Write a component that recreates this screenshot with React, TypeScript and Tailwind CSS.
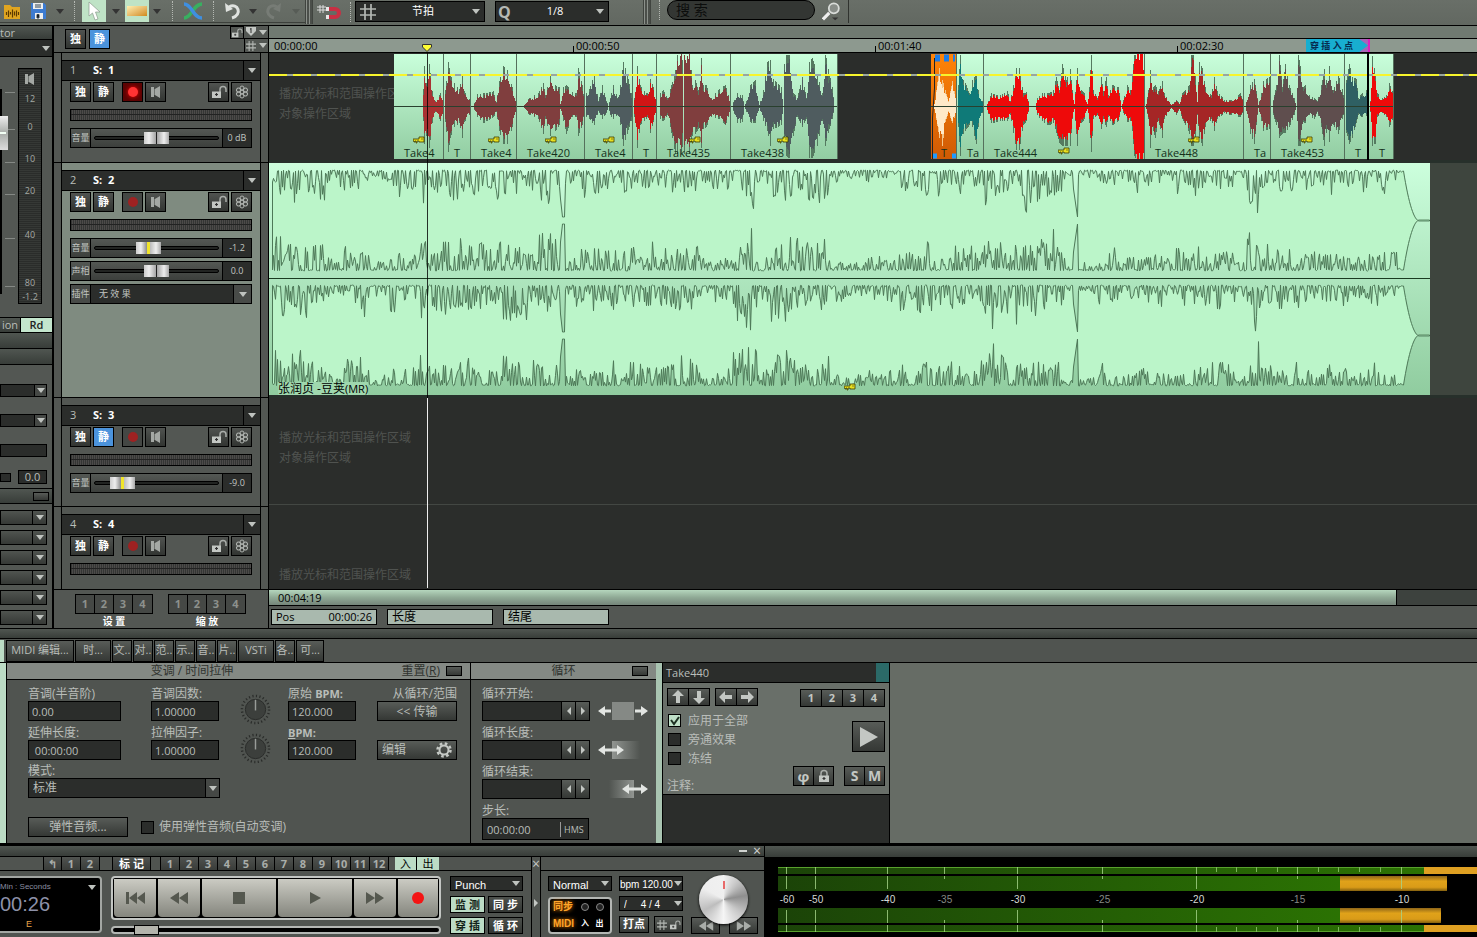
import { useId, type ReactNode } from 'react';
import clsx from 'clsx';

type Peak = [x: number, up: number, down: number];

interface Clip {
  name: string;
  width: number;
  gap?: number;
  color: string;
  keyX?: number;
  low?: boolean;
  selected?: boolean;
  peaks: Peak[];
}

const vocalClips: Clip[] = [
  { name: 'Take4', width: 50, gap: 125, color: '#a83232', keyX: 19, peaks: [[28, 0, 0], [29, 16, 14], [30, 38, 36], [32, 22, 28], [35, 40, 40], [38, 14, 16], [41, 5, 5], [46, 12, 14], [49, 8, 8]] },
  { name: 'T', width: 27, color: '#803e3e', peaks: [[1, 15, 15], [4, 42, 44], [6, 30, 30], [10, 22, 20], [15, 16, 16], [18, 30, 30], [20, 14, 15], [26, 5, 6]] },
  { name: 'Take4', width: 46, color: '#803e3e', keyX: 17, peaks: [[2, 0, 0], [6, 11, 10], [12, 12, 16], [22, 14, 10], [25, 4, 5], [28, 24, 24], [32, 38, 36], [36, 34, 36], [41, 18, 20], [45, 3, 3]] },
  { name: 'Take420', width: 68, color: '#803e3e', keyX: 28, peaks: [[6, 0, 0], [11, 7, 7], [21, 12, 12], [26, 22, 26], [28, 10, 12], [33, 30, 28], [38, 20, 24], [42, 18, 18], [43, 2, 2], [46, 18, 14], [49, 20, 26], [55, 13, 10], [59, 12, 10], [61, 36, 28], [65, 20, 18], [67, 3, 2]] },
  { name: 'Take4', width: 48, color: '#4f5c5f', keyX: 18, peaks: [[1, 12, 10], [4, 16, 12], [9, 30, 18], [13, 5, 4], [17, 20, 12], [21, 5, 6], [23, 0, 0], [25, 8, 8], [28, 20, 12], [32, 8, 8], [35, 20, 18], [38, 42, 38], [42, 30, 26], [46, 12, 14]] },
  { name: 'T', width: 24, color: '#d01515', peaks: [[1, 8, 10], [4, 38, 40], [7, 20, 18], [11, 14, 14], [14, 12, 10], [17, 26, 25], [20, 18, 15], [23, 6, 6]] },
  { name: 'Take435', width: 74, color: '#803e3e', keyX: 32, peaks: [[3, 12, 12], [6, 15, 14], [10, 8, 8], [13, 16, 20], [18, 34, 46], [20, 58, 46], [24, 62, 46], [25, 44, 39], [26, 0, 0], [27, 62, 46], [32, 62, 46], [35, 20, 28], [38, 25, 26], [41, 15, 22], [44, 46, 40], [46, 20, 22], [49, 20, 20], [54, 8, 10], [62, 16, 12], [68, 20, 18], [73, 4, 4]] },
  { name: 'Take438', width: 107, color: '#4f5c5f', keyX: 46, peaks: [[2, 4, 4], [6, 12, 16], [11, 10, 15], [13, 0, 0], [15, 5, 5], [19, 20, 15], [24, 25, 16], [28, 1, 1], [32, 15, 14], [36, 42, 24], [39, 44, 38], [42, 26, 22], [50, 18, 18], [52, 0, 0], [53, 40, 30], [55, 51, 48], [58, 51, 52], [62, 12, 28], [66, 8, 10], [71, 28, 20], [75, 8, 12], [78, 42, 50], [81, 46, 50], [86, 30, 38], [91, 12, 14], [94, 51, 38], [97, 35, 25], [101, 18, 12], [103, 0, 0]] },
  { name: 'T', width: 26, gap: 93, color: '#ffe9c8', selected: true, peaks: [[3, 2, 2], [8, 36, 30], [11, 25, 38], [14, 15, 15], [17, 5, 5], [21, 24, 16], [25, 5, 5]] },
  { name: 'Ta', width: 27, color: '#0f7a78', peaks: [[1, 20, 20], [3, 50, 48], [6, 25, 26], [9, 20, 22], [12, 12, 18], [15, 25, 20], [19, 30, 36], [21, 15, 20], [26, 2, 2]] },
  { name: 'Take444', width: 161, color: '#ee0a0a', keyX: 74, low: true, peaks: [[2, 0, 0], [7, 12, 16], [16, 10, 14], [23, 14, 14], [26, 5, 8], [29, 20, 25], [32, 36, 42], [35, 36, 42], [39, 12, 18], [42, 13, 14], [45, 0, 0], [51, 0, 0], [53, 8, 8], [58, 12, 14], [64, 12, 18], [69, 15, 16], [72, 28, 25], [75, 15, 35], [78, 40, 38], [82, 25, 38], [86, 35, 38], [88, 15, 12], [90, 2, 2], [93, 36, 38], [97, 15, 16], [100, 12, 12], [103, 2, 2], [105, 18, 16], [107, 51, 44], [109, 15, 12], [113, 8, 8], [117, 28, 22], [119, 14, 12], [122, 28, 20], [124, 10, 10], [128, 20, 18], [134, 18, 14], [137, 0, 0], [139, 6, 6], [143, 20, 15], [146, 15, 14], [148, 30, 24], [151, 60, 60], [154, 66, 66], [158, 66, 66], [160, 25, 50]] },
  { name: 'Take448', width: 99, color: '#a52626', keyX: 43, peaks: [[1, 2, 2], [3, 15, 12], [5, 34, 40], [8, 18, 24], [10, 20, 30], [13, 14, 14], [17, 24, 30], [19, 12, 12], [26, 1, 1], [31, 6, 8], [34, 2, 2], [37, 12, 12], [44, 20, 26], [46, 51, 38], [48, 58, 38], [50, 30, 34], [52, 4, 8], [54, 42, 30], [57, 36, 38], [60, 18, 20], [66, 10, 12], [69, 28, 24], [72, 14, 12], [79, 6, 6], [86, 6, 8], [95, 12, 10], [98, 4, 4]] },
  { name: 'Ta', width: 27, color: '#7f4040', peaks: [[2, 4, 4], [6, 20, 26], [10, 26, 36], [13, 8, 8], [14, 1, 1], [17, 12, 14], [19, 24, 24], [25, 28, 22]] },
  { name: 'Take453', width: 74, color: '#5f4e4e', keyX: 30, peaks: [[2, 6, 8], [5, 20, 18], [8, 50, 30], [11, 18, 26], [14, 40, 25], [18, 20, 20], [23, 8, 8], [25, 0, 0], [27, 49, 38], [29, 38, 38], [32, 18, 15], [34, 20, 16], [38, 10, 8], [43, 8, 12], [46, 5, 5], [50, 20, 20], [53, 35, 38], [55, 25, 25], [58, 38, 34], [62, 15, 18], [67, 30, 26], [71, 16, 12], [73, 4, 4]] },
  { name: 'T', width: 24, color: '#2f6063', peaks: [[1, 25, 25], [4, 40, 36], [7, 28, 30], [11, 26, 16], [13, 8, 8], [17, 12, 10], [22, 16, 8]] },
  { name: 'T', width: 25, color: '#ee0a0a', peaks: [[1, 5, 5], [3, 48, 38], [6, 30, 36], [8, 12, 10], [13, 8, 6], [17, 10, 10], [20, 22, 20], [24, 12, 10]] },
];

// how deep the quiet notches cut into the limited mix, by horizontal region
const mixRegions: [end: number, depth: number][] = [
  [56, 36], [75, 16], [100, 32], [118, 12], [150, 26], [290, 38], [306, 18], [345, 34], [430, 32], [464, 20],
  [488, 48], [502, 18], [560, 38], [630, 16], [712, 28], [796, 42], [806, 8], [830, 14], [864, 26], [905, 22],
  [966, 28], [978, 12], [1000, 46], [1128, 24],
];

const noise = (n: number) => {
  const s = Math.sin(n * 127.1 + 11.7) * 43758.5453;
  return s - Math.floor(s);
};

// body is the filled mass of the wave, spikes are the thin peaks that stick out of it
function clipPaths(clip: Clip, seed: number) {
  let body = '';
  let spikes = '';
  const { peaks } = clip;
  const last = peaks[peaks.length - 1][0];
  for (let x = peaks[0][0]; x <= last; x++) {
    const i = Math.max(0, peaks.findIndex((p) => p[0] >= x));
    const b = peaks[i];
    const a = peaks[Math.max(0, i - 1)];
    const t = b[0] === a[0] ? 1 : (x - a[0]) / (b[0] - a[0]);
    const n = noise(seed * 97 + x);
    const k = 0.66 + n * 0.26;
    const up = a[1] + (b[1] - a[1]) * t;
    const down = a[2] + (b[2] - a[2]) * t;
    body += `M${x + 0.5} ${52 - Math.round(up * k)}V${53 + Math.round(down * k)}`;
    if (n > 0.6 || t === 1) spikes += `M${x + 0.5} ${52 - Math.round(Math.min(51, up * 1.05))}V${53 + Math.round(Math.min(51, down * 1.02))}`;
  }
  return { body, spikes };
}

function mixEdge(seed: number, flip: number) {
  const pts: number[] = [];
  for (let x = 3; x < 1161; x++) {
    const depth = mixRegions.find((r) => x < r[0])?.[1] ?? 6;
    const n = noise(x * 1.37 + seed + flip);
    const swell = 0.45 + 0.6 * noise(Math.floor(x / 6) + seed);
    // busy regions flip between the limit and a notch nearly every pixel
    const rest = depth > 28 ? 0.28 : 0.4;
    let v = n < rest ? n * 4 : Math.pow((n - rest) / (1 - rest), 1.15) * depth * swell + 1;
    if (x >= 291 && x <= 293) v = 20 + (x - 290) * 9;
    if (x === 294 || x === 295) v = 47;
    if (x >= 804 && x <= 808) v = 12 + (x - 803) * 7;
    if (x >= 1134) v = 51 - 50 * Math.pow(Math.max(0, 1 - (x - 1134) / 16), 2);
    pts.push(Math.min(51, v));
  }
  return pts;
}

function mixPath(center: number, seed: number) {
  const top = mixEdge(seed, 0).map((v, i) => `${i + 3.5} ${(center - 50 + v).toFixed(1)}`);
  const bottom = mixEdge(seed, 40).map((v, i) => `${i + 3.5} ${(center + 51 - v).toFixed(1)}`).reverse();
  return `M${top.join('L')}L${bottom.join('L')}Z`;
}

const dark = 'border border-black bg-[#2b2d2b]';
const raised = 'border border-black bg-linear-to-b from-[#585c58] to-[#353835]';
const bar = 'bg-linear-to-b from-[#505651] to-[#383d39]';

function Caret({ className = 'text-[#bfc3bf]' }: { className?: string }) {
  return (
    <svg viewBox="0 0 8 5" className={clsx('h-[5px] w-2 shrink-0', className)} aria-hidden="true">
      <path d="M0 0h8L4 5z" fill="currentColor" />
    </svg>
  );
}

function Select({ label, value, className, caretBox, textClass = 'pr-3 pl-2' }: { label: string; value: string; className?: string; caretBox?: string; textClass?: string }) {
  return (
    <div className={clsx('relative flex items-center', dark, className)}>
      <select aria-label={label} className={clsx('h-full w-full min-w-0 appearance-none bg-transparent outline-none', textClass)}>
        <option>{value}</option>
      </select>
      <span className={clsx('pointer-events-none absolute inset-y-0 right-0 flex items-center justify-center', caretBox || 'w-3')}>
        <Caret />
      </span>
    </div>
  );
}

function SpeakerIcon() {
  return (
    <svg viewBox="0 0 12 14" className="h-3.5 w-3" aria-hidden="true">
      <path d="M1 2h3v2.500L10 1v12L4 9.500V12H1z" fill="#a4a8a4" />
      <path d="M4.500 4v6" stroke="#6f736f" />
    </svg>
  );
}

function LockIcon({ open = true, className = 'h-3.5 w-4' }: { open?: boolean; className?: string }) {
  return (
    <svg viewBox="0 0 16 14" className={className} fill="none" aria-hidden="true">
      <path d={open ? 'M9 7V4.500a3 3 0 0 1 6 0V7' : 'M5 7V4.500a3 3 0 0 1 6 0V7'} stroke="#a9ada9" strokeWidth="1.500" />
      <path d={open ? 'M1 6.500h9V13H1z' : 'M3 6.500h10V13H3z'} fill="#c3c7c3" />
      <path d={open ? 'M5.500 8v3M4 9.500h3' : 'M8 8v3M6.500 9.500h3'} stroke="#333" strokeWidth="1.200" />
    </svg>
  );
}

function FlowerIcon() {
  return (
    <svg viewBox="0 0 14 14" className="h-3.5 w-3.5" fill="none" stroke="#aeb2ae" aria-hidden="true">
      <circle cx="7" cy="7" r="1.800" />
      {[0, 60, 120, 180, 240, 300].map((a) => (
        <circle key={a} cx="7" cy="3" r="2" transform={`rotate(${a} 7 7)`} />
      ))}
    </svg>
  );
}

function HashIcon({ className = 'h-3 w-3' }: { className?: string }) {
  return (
    <svg viewBox="0 0 16 16" className={className} fill="none" stroke="#b4b8b4" strokeWidth="1.700" aria-hidden="true">
      <path d="M5 0v16M11 0v16M0 5h16M0 11h16" />
    </svg>
  );
}

function KeyIcon() {
  return (
    <svg viewBox="0 0 12 8" className="h-2 w-3" aria-hidden="true">
      <path d="M0 3h6V1h5v5H6V5H4v2H3V5H2v1H1V5H0z" fill="#e8e020" stroke="#3a3a00" strokeWidth=".8" />
      <path d="M8.500 3h1" stroke="#222" />
    </svg>
  );
}

function Dots({ className }: { className: string }) {
  return (
    <span className={clsx('flex shrink-0 justify-center', className)}>
      <span className="h-5 border-l border-dotted border-[#b4b8b2]" />
    </span>
  );
}

function Grip({ className }: { className: string }) {
  return <span className={clsx('h-6 shrink-0 border-x border-[#40443f] bg-[repeating-linear-gradient(90deg,#8b908a_0_1px,#4b4f4a_1px_3px)]', className)} />;
}

function ToolButton({ label, className, children }: { label: string; className: string; children: ReactNode }) {
  return (
    <button aria-label={label} className={clsx('flex h-full shrink-0 items-center justify-center', className)}>
      {children}
    </button>
  );
}

function Toolbar() {
  return (
    <header className="flex h-[26px] shrink-0 items-start border-b border-black bg-linear-to-b from-[#696f68] to-[#626861]">
      <div className="flex h-[23px] items-center border-b border-[#3c403b]">
        <ToolButton label="Open" className="w-6">
          <svg viewBox="0 0 18 17" className="h-[17px] w-[18px]"><path d="M1 2h6l2 2h8v12H1z" fill="#e0a520" /><path d="M3.500 12V9m2 5V7.500m2 4V9m2 5.500V6.500m2 6V8.500m2 5V7.500m2 4.500V9" stroke="#5c3900" strokeWidth="1.200" /></svg>
        </ToolButton>
        <ToolButton label="Save" className="w-7">
          <svg viewBox="0 0 17 18" className="h-[18px] w-[17px]"><path d="M1 1h13l2 2v14H1z" fill="#3d7bd0" /><path d="M3 1h10v6H3zM5 11h8v6H5z" fill="#eee" /><path d="M5 3h6M5 5h6M7 12.500h2V16H7z" stroke="#345" /></svg>
        </ToolButton>
        <ToolButton label="Save options" className="w-4"><Caret className="text-[#333]" /></ToolButton>
        <Dots className="w-3" />
        <ToolButton label="Object tool" className="ml-0.5 w-6 bg-[#bfe3c6]">
          <svg viewBox="0 0 14 20" className="h-5 w-3.5"><path d="M2 1v14l3.500-3 2.500 7 3-1-2.500-7H13z" fill="#fff" stroke="#8b9a8d" strokeWidth=".7" /></svg>
        </ToolButton>
        <ToolButton label="Tool options" className="w-[19px]"><Caret className="text-[#333]" /></ToolButton>
        <ToolButton label="Range tool" className="w-6 bg-[#bfe3c6]">
          <span className="h-2.5 w-5 bg-linear-to-br from-[#fff0b0] to-[#d08a12]" />
        </ToolButton>
        <ToolButton label="Range options" className="w-4"><Caret className="text-[#333]" /></ToolButton>
        <Dots className="w-3.5" />
        <ToolButton label="Crossfade" className="w-7">
          <svg viewBox="0 0 20 18" className="h-[18px] w-5" fill="none" strokeWidth="3.500"><path d="M1 16c8 0 9-14 18-14" stroke="#38b060" /><path d="M1 2c8 0 9 14 18 14" stroke="#3f8fe0" /></svg>
        </ToolButton>
        <Dots className="w-3" />
        <ToolButton label="Undo" className="w-7">
          <svg viewBox="0 0 18 18" className="h-[18px] w-[18px]" fill="none"><path d="M5 5c9-5 14 8 3 11" stroke="#dfe2df" strokeWidth="3" /><path d="M1 1l1 9 7-3z" fill="#dfe2df" /></svg>
        </ToolButton>
        <ToolButton label="Undo history" className="w-3"><Caret className="text-[#333]" /></ToolButton>
        <ToolButton label="Redo" className="w-7">
          <svg viewBox="0 0 18 18" className="h-[18px] w-[18px]" fill="none"><path d="M13 5C4 0-1 13 10 16" stroke="#777c76" strokeWidth="3" /><path d="M17 1l-1 9-7-3z" fill="#777c76" /></svg>
        </ToolButton>
        <ToolButton label="Redo history" className="w-[18px]"><Caret className="text-[#575c56]" /></ToolButton>
      </div>
      <Grip className="w-2" />
      <div className="flex h-[23px] items-center">
        <ToolButton label="Snap" className="w-8">
          <svg viewBox="0 0 24 16" className="h-4 w-6" fill="none"><path d="M3 1v8M6 1v8M0 3h9M0 6h9" stroke="#ddd" /><path d="M10 5h8a4 4 0 0 1 0 8h-8" stroke="#c92f43" strokeWidth="4" /><path d="M9 5h3M9 13h3" stroke="#e8e8e8" strokeWidth="4" /></svg>
        </ToolButton>
        <Dots className="w-2.5" />
        <div className="flex h-[21px] w-[130px] items-center border border-black bg-[#2b2d2b] pl-1">
          <HashIcon className="h-4 w-4 shrink-0" />
          <Select label="网格" value="节拍" className="h-full grow border-0 text-[11px] text-white" textClass="pl-9 pr-3" caretBox="w-4" />
        </div>
        <div className="ml-2.5 flex h-[21px] w-[114px] items-center border border-black bg-[#2b2d2b] pl-0.5">
          <span className="text-base font-bold text-[#b4b8b4]">Q</span>
          <Select label="量化" value="1/8" className="h-full grow border-0 text-[11px] text-white" textClass="pl-9 pr-3" caretBox="w-4" />
        </div>
      </div>
      <Grip className="ml-[34px] w-2" />
      <Dots className="w-4" />
      <input aria-label="搜索" placeholder="搜 索" className="h-5 w-[148px] rounded-full border border-black bg-[#333633] px-2 text-sm text-white outline-none placeholder:text-[#0c0d0c]" />
      <button aria-label="Find" className="flex h-[23px] w-[34px] items-center justify-center border-r border-[#30332f]">
        <svg viewBox="0 0 22 22" className="h-5 w-5" fill="none"><path d="M1 19l7-7" stroke="#eee" strokeWidth="3.500" /><circle cx="13" cy="7" r="5.500" fill="#888d88" stroke="#d9dcd9" strokeWidth="2" /><path d="M11 17h7l-3.500 3z" fill="#333" /></svg>
      </button>
    </header>
  );
}

function Inspector() {
  return (
    <aside className="flex w-[54px] shrink-0 flex-col overflow-hidden border-r-2 border-black bg-[#535753] text-[11px] text-[#b9bdb9]">
      <div className={clsx('h-[13px] text-[11px] leading-[13px]', bar)}>tor</div>
      <Select label="Object manager" value="" className="h-[18px] border-x-0" />
      <div className="flex h-[260px] pt-[11px]">
        <div className="relative flex w-[18px]">
          <div className="mt-[21px] h-[205px] w-[2px] bg-black" />
          <div className="ml-[3px] flex w-2.5 flex-col">
            <span className="h-[25px] border-b border-[#858985]" />
            <span className="h-[37px] border-b border-[#858985]" />
            <span className="h-[33px] border-b border-[#858985]" />
            <span className="h-8 border-b border-[#858985]" />
            <span className="h-11 border-b border-[#858985]" />
            <span className="h-12 border-b border-[#858985]" />
          </div>
          <div className="absolute top-12 left-0 flex h-[34px] w-2 items-center bg-linear-to-b from-[#eee] via-[#a8aca8] to-[#ddd]">
            <span className="h-[2px] w-1.5 bg-[#f2fff4]" />
          </div>
        </div>
        <div className="flex h-[236px] w-6 flex-col items-center border border-black bg-[repeating-linear-gradient(180deg,#2a2c2a_0_1px,#353835_1px_2px)] text-[9px] leading-3 text-[#a5a9a5]">
          <span className="flex h-5 items-center"><SpeakerIcon /></span>
          <span className="flex h-4 items-end">12</span>
          <span className="flex h-7 items-end">0</span>
          <span className="flex h-8 items-end">10</span>
          <span className="flex h-8 items-end">20</span>
          <span className="flex h-11 items-end">40</span>
          <span className="flex h-12 items-end">80</span>
          <span className="flex grow items-end">-1.2</span>
        </div>
      </div>
      <div className="flex h-4 border-y border-black text-[11px] leading-[14px]">
        <button className={clsx('w-[21px] border-r border-black', bar)}>ion</button>
        <button className="grow bg-[#c4e6cd] font-semibold text-[#222]">Rd</button>
      </div>
      <div className={clsx('h-4 border-b border-black', bar)} />
      <div className={clsx('h-4 border-b border-black', bar)} />
      <div className="mt-[19px] flex flex-col gap-[17px] pr-[5px]">
        <Select label="Input" value="" className="h-[13px]" caretBox="w-3 border-l border-black bg-[#454845]" />
        <Select label="Output" value="" className="h-[13px]" caretBox="w-3 border-l border-black bg-[#454845]" />
        <input aria-label="Group" className={clsx('h-[13px] w-full', dark)} />
      </div>
      <div className="mt-[13px] flex items-center gap-[7px]">
        <span className={clsx('h-[9px] w-[11px]', dark)} />
        <span className={clsx('h-[14px] w-[29px] text-center text-[11px] leading-3', dark)}>0.0</span>
      </div>
      <div className={clsx('mt-[4px] mb-[6px] flex h-4 shrink-0 items-center justify-end border-y border-black pr-[3px]', bar)}>
        <span className={clsx('h-[9px] w-4', raised)} />
      </div>
      <div className="flex flex-col gap-[5px] pr-[5px]">
        {['A', 'B', 'C', 'D', 'E', 'F'].map((slot) => (
          <Select key={slot} label={`Slot ${slot}`} value="" className="h-[15px] bg-linear-to-b from-[#505450] to-[#363936]" caretBox="w-3.5 border-l border-black" />
        ))}
      </div>
    </aside>
  );
}

function SquareButton({ label, active, children }: { label?: string; active?: boolean; children: ReactNode }) {
  return (
    <button
      aria-label={label}
      className={clsx(
        'flex h-5 w-[21px] items-center justify-center border border-black text-[11px] font-bold text-white',
        active ? 'bg-[#4b93dc]' : 'bg-linear-to-b from-[#505350] to-[#323532]',
      )}
    >
      {children}
    </button>
  );
}

function LevelRow({ label, value, pos, zero }: { label: string; value: string; pos: number; zero?: boolean }) {
  const id = useId();
  return (
    <div className="flex h-5 border border-black bg-linear-to-b from-[#545854] to-[#3c3f3c]">
      <label htmlFor={id} className="w-5 shrink-0 border-r border-black text-center text-[9px] leading-[18px] whitespace-nowrap text-[#c1c5c1]">{label}</label>
      <div className="flex grow items-center border-r border-black px-[3px]">
        <input
          id={id}
          type="range"
          defaultValue={pos}
          className={clsx(
            'h-1 w-full min-w-0 appearance-none rounded-full border border-black bg-[#222422] [&::-webkit-slider-thumb]:h-3 [&::-webkit-slider-thumb]:w-[25px] [&::-webkit-slider-thumb]:appearance-none',
            zero
              ? '[&::-webkit-slider-thumb]:bg-[linear-gradient(90deg,#ccc,#eee_5px,#a4a4a4_12px,#222_12px,#222_13px,#a4a4a4_13px,#eee_20px,#aaa)]'
              : '[&::-webkit-slider-thumb]:bg-[linear-gradient(90deg,#ccc,#eee_5px,#8a8a8a_11px,#f1e52a_11px,#f1e52a_14px,#bbb_14px,#eee_20px,#aaa)]',
          )}
        />
      </div>
      <output htmlFor={id} className="w-7 shrink-0 bg-[#2b2d2b] text-center text-[9px] leading-[18px] text-[#c1c5c1]">{value}</output>
    </div>
  );
}

interface TrackProps {
  n: number;
  className: string;
  muted?: boolean;
  armed?: boolean;
  children?: ReactNode;
}

function Track({ n, className, muted, armed, children }: TrackProps) {
  return (
    <section className={clsx('flex shrink-0 border-b border-black px-[7px]', className)}>
      <div className={clsx('flex grow flex-col border-x border-black pt-[7px]', n === 2 ? 'bg-[#7f8b80]' : 'bg-[#535753]')}>
        <div className="flex h-[21px] shrink-0 items-center border-y border-black bg-[#2b2d2b] text-[11px] text-[#b9bdb9]">
          <span className="w-[31px] pl-2">{n}</span>
          <span className="grow font-bold text-white">S:&nbsp; {n}</span>
          <button aria-label={`Track ${n} menu`} className="flex h-full w-[17px] items-center justify-center border-l border-black"><Caret /></button>
        </div>
        <div className="flex flex-col px-2 pt-px">
          <div className="flex gap-[2px]">
            <SquareButton>独</SquareButton>
            <SquareButton active={muted}>静</SquareButton>
            <button aria-label="Record" className={clsx('ml-1.5 flex h-5 w-[21px] items-center justify-center border border-black', armed ? 'bg-[#5c0303]' : 'bg-[#444744]')}>
              <span className={clsx('h-2.5 w-2.5 rounded-full', armed ? 'bg-[#f33] shadow-[0_0_4px_#f00]' : 'bg-[#9e2222]')} />
            </button>
            <SquareButton label="Monitor"><SpeakerIcon /></SquareButton>
            <span className="grow" />
            <SquareButton label="Lock"><LockIcon /></SquareButton>
            <SquareButton label="Plugins"><FlowerIcon /></SquareButton>
          </div>
          <div className="mt-[7px] mb-[7px] h-3 border border-black bg-[linear-gradient(180deg,transparent_4px,#222_4px,#222_5px,transparent_5px),repeating-linear-gradient(90deg,#343634_0_1px,#4c4a49_1px_2px)]" />
          <div className="flex flex-col gap-[3px]">{children}</div>
        </div>
      </div>
    </section>
  );
}

function NumberBank({ label }: { label: string }) {
  return (
    <div className="flex flex-col items-center">
      <div className="flex border border-black">
        {[1, 2, 3, 4].map((n) => (
          <button key={n} className="h-[18px] w-[19px] border-r border-black bg-[#454845] text-[11px] font-bold text-[#8d918d] last:border-r-0">{n}</button>
        ))}
      </div>
      <span className="text-[10px] leading-[14px] font-bold whitespace-pre text-white">{label}</span>
    </div>
  );
}

function TrackList() {
  return (
    <div className="flex w-[215px] shrink-0 flex-col border-r border-black bg-[#535753]">
      <div className="flex h-[27px] shrink-0 border-b border-black pl-[11px]">
        <div className="flex grow gap-[3px] pt-[3px]">
          <SquareButton>独</SquareButton>
          <SquareButton active>静</SquareButton>
        </div>
        <button aria-label="Lock all" className="flex h-[13px] w-[14px] items-center justify-center border border-black"><LockIcon className="h-2.5 w-3" /></button>
        <div className="flex w-[24px] flex-col">
          <button aria-label="Marker menu" className="flex h-[13px] items-center justify-center gap-[3px] border-b border-black">
            <svg viewBox="0 0 10 10" className="h-2.5 w-2.5"><path d="M0 0h10v4L5 9 0 4z" fill="#c3c7c3" /><path d="M5 1v5M4 2h1" stroke="#333" /></svg>
            <Caret />
          </button>
          <button aria-label="Grid menu" className="flex h-[13px] items-center justify-center gap-[3px] border-l border-black"><HashIcon className="h-2.5 w-2.5" /><Caret /></button>
        </div>
      </div>
      <Track n={1} className="h-[110px]" armed>
        <LevelRow label="音量" value="0 dB" pos={50} zero />
      </Track>
      <Track n={2} className="h-[235px]">
        <LevelRow label="音量" value="-1.2" pos={42} />
        <LevelRow label="声相" value="0.0" pos={50} zero />
        <div className="flex h-5 border border-black bg-[#2b2d2b] text-[10px] text-[#c1c5c1]">
          <span className="w-5 shrink-0 border-r border-black bg-[#484b48] text-center text-[9px] leading-[18px] whitespace-nowrap">插件</span>
          <Select label="插件" value="无 效 果" className="grow border-0 text-[9px]" caretBox="w-[18px] border-l border-black bg-[#484b48]" />
        </div>
      </Track>
      <Track n={3} className="h-[109px]" muted>
        <LevelRow label="音量" value="-9.0" pos={15} />
      </Track>
      <Track n={4} className="h-[83px]" />
      <div className="flex gap-[15px] pt-1 pl-[21px]">
        <NumberBank label="设 置" />
        <NumberBank label="缩 放" />
      </div>
    </div>
  );
}

function Hint({ short }: { short?: boolean }) {
  return (
    <p className="text-xs leading-5 whitespace-nowrap text-[#505350]">
      播放光标和范围操作区域
      {!short && <><br />对象操作区域</>}
    </p>
  );
}

function VocalClip({ clip, index }: { clip: Clip; index: number }) {
  const { body, spikes } = clipPaths(clip, index + 1);
  return (
    <div
      className={clsx(
        'relative flex h-[105px] shrink-0 items-end overflow-hidden border-r border-[#55705c]',
        clip.selected ? 'bg-linear-to-b from-[#ff8408] to-[#cf5a04]' : 'bg-linear-to-b from-[#c9ffdb] to-[#92cda2]',
      )}
      style={{ width: clip.width, marginLeft: clip.gap ?? 0 }}
    >
      <svg className="absolute inset-0 h-full w-full" aria-hidden="true">
        <path d={spikes} stroke={clip.selected ? '#f2c489' : '#557a60'} />
        <path d={body} stroke={clip.color} />
        <path d="M0 52.500h200" stroke="#29402e" />
        {clip.selected && <path d="M4 4h20" stroke="#1d7de8" strokeWidth="7" strokeDasharray="5 4" />}
        {clip.selected && <path d="M1 102h5M21 102h5" stroke="#1d9bff" strokeWidth="5" />}
        {clip.selected && <path d="M3.500 4v30l-2 30v41" fill="none" stroke="#222" />}
      </svg>
      {clip.keyX !== undefined && (
        <span className={clsx('absolute', clip.low ? 'bottom-1' : 'bottom-[15px]')} style={{ left: clip.keyX }}><KeyIcon /></span>
      )}
      <span className="relative pl-2.5 text-[11px] leading-[13px] text-[#14301b]">{clip.name}</span>
    </div>
  );
}

function Timeline() {
  return (
    <div className="flex min-w-0 grow flex-col bg-[#535753]">
      <div className="h-[13px] border-b border-black bg-[#707a71]" />
      <div className="relative flex h-[14px] items-end overflow-hidden border-b border-black bg-[#8d998f] pl-[2px] text-[11px] leading-3 text-black">
        {['00:00:00', '00:00:50', '00:01:40', '00:02:30'].map((t, i) => (
          <span key={t} className="flex w-[302px] shrink-0 items-end gap-[2px]">
            <span className={clsx('h-1.5 w-px', i > 0 && 'bg-black')} />
            {t}
          </span>
        ))}
        <svg viewBox="0 0 10 8" className="absolute bottom-0 left-[153px] h-2 w-2.5" aria-hidden="true"><path d="M.5.5h9V3L5 7.500.5 3z" fill="#ff3" stroke="#333" /></svg>
        <div className="absolute top-0 left-[1037px] flex h-full w-[64px] items-center border-r-2 border-[#e020c0] bg-[#a864b8]">
          <span className="h-full w-full bg-[#18aed0] pl-1 text-[9px] leading-[13px] font-bold whitespace-pre text-[#062c50] [clip-path:polygon(0_0,86%_0,100%_50%,86%_100%,0_100%)]">穿 插 入 点</span>
        </div>
      </div>
      <div className="relative flex flex-col overflow-hidden">
        <div className="relative h-[110px] shrink-0 overflow-hidden border-b-[3px] border-[#27302b] bg-[#2b2d2b] pt-px">
          <div className="absolute top-[31px] left-2.5"><Hint /></div>
          <div className="relative flex">
            {vocalClips.map((clip, i) => <VocalClip key={i} clip={clip} index={i} />)}
          </div>
          <div className="absolute inset-x-0 top-[21px] h-[2px] bg-[repeating-linear-gradient(90deg,#f7f42c_0_18px,#9aa59e_18px_24px)]" />
          <div className="absolute inset-y-0 left-[1098px] w-[2px] bg-black" />
        </div>
        <div className="h-[235px] shrink-0 border-b-[3px] border-[#27302b] bg-[#3e453e]">
          <div className="relative flex h-full w-[1161px] items-end bg-linear-to-b from-[#ccffdd] to-[#90cc9f]">
            <svg className="absolute inset-0 h-full w-full" aria-hidden="true">
              <path d={mixPath(57, 3)} fill="#bbf5c9" stroke="#4d7857" strokeLinejoin="bevel" />
              <path d={mixPath(172, 9)} fill="#bbf5c9" stroke="#4d7857" strokeLinejoin="bevel" />
              <path d="M0 115.500h1161" stroke="#193a20" />
            </svg>
            <span className="absolute bottom-1 left-[575px]"><KeyIcon /></span>
            <span className="relative ml-[9px] bg-[#9fd8ae] text-[11px] leading-[13px] text-black"><span className="text-xs leading-[13px]">张润贞 -豆荚</span>(MR)</span>
          </div>
        </div>
        <div className="h-[107px] shrink-0 border-b border-[#434743] bg-[#2b2d2b] pt-[30px] pl-2.5"><Hint /></div>
        <div className="h-[85px] shrink-0 border-b border-black bg-[#2b2d2b] pt-[60px] pl-2.5"><Hint short /></div>
        <div className="absolute top-0 bottom-[190px] left-[158px] w-px bg-black/80" />
        <div className="absolute top-[345px] bottom-[2px] left-[158px] w-px bg-[#eee]" />
      </div>
      <div className="h-4 border-b border-black bg-[#3d423e] pr-20">
        <div className="h-full border-r border-black bg-linear-to-b from-[#b5d6bd] via-[#8fa995] to-[#75857a] pl-[9px] text-[11px] leading-[15px] text-black">00:04:19</div>
      </div>
      <div className="flex h-[22px] items-center gap-2.5 pl-[2px] text-[11px] text-black">
        <label className="flex h-4 w-[106px] items-center border border-black bg-[#a9b9ae] px-1">
          Pos
          <input defaultValue="00:00:26" className="w-full min-w-0 text-right outline-none" />
        </label>
        <label className="flex h-4 w-[106px] items-center border border-black bg-[#a9b9ae] px-1 text-xs whitespace-nowrap">长度<input className="w-full min-w-0" /></label>
        <label className="flex h-4 w-[106px] items-center border border-black bg-[#a9b9ae] px-1 text-xs whitespace-nowrap">结尾<input className="w-full min-w-0" /></label>
      </div>
    </div>
  );
}

const tabs: [string, string][] = [
  ['MIDI 编辑...', 'w-[68px]'], ['时...', 'w-[36px]'], ['文..', 'w-5'], ['对..', 'w-5'], ['范..', 'w-5'], ['示..', 'w-5'],
  ['音..', 'w-5'], ['片..', 'w-5'], ['VSTi', 'w-9'], ['各..', 'w-5'], ['可...', 'w-7'],
];

function Field({ label, value, className }: { label: ReactNode; value: string; className: string }) {
  const id = useId();
  return (
    <div className="flex flex-col">
      <label htmlFor={id} className="text-xs leading-[15px] whitespace-nowrap">{label}</label>
      <input id={id} defaultValue={value} className={clsx('h-5 px-[3px] text-[11px] outline-none', dark, className)} />
    </div>
  );
}

function Dial({ label }: { label: string }) {
  return (
    <button aria-label={label} className="mt-2 -mb-1 h-[31px]">
      <svg viewBox="0 0 32 32" className="h-[31px] w-[31px]">
        <circle cx="16" cy="16" r="14" fill="none" stroke="#2a2c2a" strokeWidth="2.500" strokeDasharray="1.200 2.465" />
        <circle cx="16" cy="16" r="10.500" fill="#3c3f3c" stroke="#2a2c2a" />
        <path d="M16 6v11" stroke="#989c98" strokeWidth="1.500" />
      </svg>
    </button>
  );
}

function LoopField({ label, art }: { label: string; art: 'both' | 'start' | 'end' }) {
  const id = useId();
  return (
    <div className="flex flex-col">
      <label htmlFor={id} className="text-xs leading-[15px]">{label}</label>
      <div className="flex">
        <input id={id} className={clsx('h-5 w-20', dark)} />
        <button aria-label="减" className={clsx('flex h-5 w-3.5 items-center justify-center border-l-0', raised)}>
          <svg viewBox="0 0 4 8" className="h-2 w-1"><path d="M4 0v8L0 4z" fill="#c3c7c3" /></svg>
        </button>
        <button aria-label="加" className={clsx('flex h-5 w-3.5 items-center justify-center border-l-0', raised)}>
          <svg viewBox="0 0 4 8" className="h-2 w-1"><path d="M0 0v8l4-4z" fill="#c3c7c3" /></svg>
        </button>
        <svg viewBox="0 0 50 20" className="ml-2 h-5 w-[50px]" aria-hidden="true">
          <defs>
            <linearGradient id={`${id}g`}>
              <stop offset="0" stopColor={art === 'end' ? '#505450' : '#929692'} />
              <stop offset="1" stopColor={art === 'start' ? '#505450' : '#929692'} />
            </linearGradient>
          </defs>
          {art === 'both' && <path d="M14 1h22v18H14z" fill="#858985" />}
          {art === 'both' && <path d="M0 10l7-5v3.500h6v3H7V15zM50 10l-7-5v3.500h-6v3h6V15z" fill="#e2e5e2" />}
          {art === 'start' && <path d="M14 1h28v18H14z" fill={`url(#${id}g)`} />}
          {art === 'start' && <path d="M0 10l7-5v3.500h12V5l7 5-7 5v-3.500H7V15z" fill="#e2e5e2" />}
          {art === 'end' && <path d="M11 1h25v18H11z" fill={`url(#${id}g)`} />}
          {art === 'end' && <path d="M24 10l7-5v3.500h12V5l7 5-7 5v-3.500H31V15z" fill="#e2e5e2" />}
        </svg>
      </div>
    </div>
  );
}

function PitchPanel() {
  return (
    <section className="flex w-[465px] shrink-0 flex-col border-x border-black bg-[#505450]">
      <div className="flex h-[17px] items-center border-b border-black bg-[#848984] pr-2 text-xs leading-4 text-[#30332f]">
        <h2 className="w-[370px] text-center">变调 / 时间拉伸</h2>
        <span className="grow" />
        <button>重置(<u>R</u>)</button>
        <span className={clsx('ml-1.5 h-2.5 w-4', raised)} />
      </div>
      <div className="grid grid-cols-[123px_89px_48px_89px_80px] gap-y-1 pt-1.5 pl-[21px]">
        <Field label="音调(半音阶)" value="0.00" className="w-[93px]" />
        <Field label="音调因数:" value="1.00000" className="w-[68px]" />
        <Dial label="音调" />
        <Field label={<>原始 <b className="text-[11px]">BPM:</b></>} value="120.000" className="w-[68px]" />
        <div className="text-xs leading-[15px]">
          <span className="block text-right whitespace-nowrap">从循环/范围</span>
          <button className={clsx('h-5 w-full', raised)}>&lt;&lt; 传输</button>
        </div>
        <Field label="延伸长度:" value=" 00:00:00" className="w-[93px]" />
        <Field label="拉伸因子:" value="1.00000" className="w-[68px]" />
        <Dial label="拉伸" />
        <Field label={<b className="text-[11px]"><u>B</u>PM:</b>} value="120.000" className="w-[68px]" />
        <button className={clsx('mt-[15px] flex h-5 items-center justify-between px-1 text-xs', raised)}>
          编辑
          <svg viewBox="0 0 16 16" className="h-4 w-4" fill="none" stroke="#c5c9c5"><circle cx="8" cy="8" r="4.500" strokeWidth="2" /><circle cx="8" cy="8" r="6.500" strokeWidth="2.500" strokeDasharray="2.600 2.500" /></svg>
        </button>
      </div>
      <div className="flex flex-col pt-[3px] pl-[21px]">
        <span className="text-xs leading-[15px]">模式:</span>
        <Select label="模式" value="标准" className="h-5 w-[192px] text-xs" textClass="pl-1" caretBox="w-3.5 border-l border-black bg-[#454845]" />
      </div>
      <div className="mt-[19px] flex items-center pl-[21px] text-xs">
        <button className={clsx('h-5 w-[100px]', raised)}>弹性音频...</button>
        <label className="ml-[13px] flex items-center gap-[5px]">
          <input type="checkbox" className={clsx('h-[13px] w-[13px] appearance-none', dark)} />
          使用弹性音频(自动变调)
        </label>
      </div>
    </section>
  );
}

function LoopPanel() {
  return (
    <section className="flex w-[185px] shrink-0 flex-col bg-[#505450]">
      <div className="flex h-[17px] items-center border-b border-black bg-[#848984] pr-2 text-xs leading-4 text-[#30332f]">
        <h2 className="grow pl-6 text-center">循环</h2>
        <span className={clsx('h-2.5 w-4 shrink-0', raised)} />
      </div>
      <div className="flex flex-col gap-1 pt-1.5 pl-[11px]">
        <LoopField label="循环开始:" art="both" />
        <LoopField label="循环长度:" art="start" />
        <LoopField label="循环结束:" art="end" />
        <label className="text-xs leading-[15px]">
          步长:
          <span className={clsx('flex h-[22px] w-[107px] items-center pl-1 text-[11px]', dark)}>
            <input defaultValue="00:00:00" className="w-[74px] border-r border-[#999] outline-none" />
            <span className="pl-[3px] text-[9px]">HMS</span>
          </span>
        </label>
      </div>
    </section>
  );
}

function IconButton({ label, className, children }: { label?: string; className?: string; children: ReactNode }) {
  return (
    <button aria-label={label} className={clsx('-ml-px flex items-center justify-center font-bold text-[#c3c7c3]', raised, className || 'h-[18px] w-[22px] text-[11px]')}>
      {children}
    </button>
  );
}

function ArrowIcon({ turn }: { turn: string }) {
  return <svg viewBox="0 0 16 16" className={clsx('h-4 w-4', turn)}><path d="M8 1l6 6h-4v7H6V7H2z" fill="#c3c7c3" /></svg>;
}

function TakePanel() {
  return (
    <section className="flex w-[228px] shrink-0 flex-col border-x border-black bg-[#696f69]">
      <div className="flex h-5 border-b border-black bg-[#2b2d2b] text-[11px] leading-[19px]">
        <h2 className="grow pl-[3px]">Take440</h2>
        <span className="w-[13px] bg-[#2b6a68]" />
      </div>
      <div className="flex h-[111px] justify-between px-1">
        <div className="flex flex-col pt-[5px] text-xs">
          <div className="mb-[5px] flex pl-px">
            <IconButton label="上"><ArrowIcon turn="" /></IconButton>
            <IconButton label="下"><ArrowIcon turn="rotate-180" /></IconButton>
            <span className="w-1.5" />
            <IconButton label="左"><ArrowIcon turn="-rotate-90" /></IconButton>
            <IconButton label="右"><ArrowIcon turn="rotate-90" /></IconButton>
          </div>
          {['应用于全部', '旁通效果', '冻结'].map((t, i) => (
            <label key={t} className="flex h-[19px] items-center gap-[7px] pl-px">
              <span className="relative flex">
                <input type="checkbox" defaultChecked={i === 0} className="h-[13px] w-[13px] appearance-none border border-black bg-[#2b2d2b] checked:bg-[#bfe0c8]" />
                {i === 0 && <svg viewBox="0 0 13 13" className="pointer-events-none absolute inset-0" fill="none"><path d="M3 6l3 4 5-7" stroke="#1d3022" strokeWidth="2" /></svg>}
              </span>
              {t}
            </label>
          ))}
          <label htmlFor="notes" className="mt-auto leading-4">注释:</label>
        </div>
        <div className="flex flex-col items-end pt-[6px]">
          <div className="flex">{[1, 2, 3, 4].map((n) => <IconButton key={n}>{n}</IconButton>)}</div>
          <IconButton label="播放" className="mt-[14px] h-[31px] w-[33px]">
            <svg viewBox="0 0 20 22" className="h-[22px] w-5"><path d="M1 1l18 10L1 21z" fill="#c3c7c3" /></svg>
          </IconButton>
          <div className="mt-[14px] flex">
            <IconButton className="h-5 w-[21px] text-[15px]">φ</IconButton>
            <IconButton label="锁定" className="h-5 w-[21px]"><LockIcon open={false} /></IconButton>
            <span className="w-[11px]" />
            <IconButton className="h-5 w-[21px] text-sm">S</IconButton>
            <IconButton className="h-5 w-[21px] text-sm">M</IconButton>
          </div>
        </div>
      </div>
      <textarea id="notes" className="min-h-0 w-full grow resize-none border-t border-black bg-[#2b2d2b] outline-none" />
    </section>
  );
}

const chip = 'h-full border-r border-black bg-linear-to-b from-[#505350] to-[#393c39] text-[11px] leading-3 font-bold text-[#a9ada9]';

const transport: [string, string, string, string][] = [
  ['Start', 'w-[42px]', 'M1 4h3v12H1zM12 4v12L4 10zM20 4v12l-8-6z', '#55584f'],
  ['Rewind', 'w-[42px]', 'M10 4v12L1 10zM19 4v12l-9-6z', '#55584f'],
  ['Stop', 'w-[74px]', 'M4 4h12v12H4z', '#55584f'],
  ['Play', 'w-[74px]', 'M5 4l11 6-11 6z', '#55584f'],
  ['Forward', 'w-[42px]', 'M1 4v12l9-6zM10 4v12l9-6z', '#55584f'],
  ['Record', 'w-[40px]', 'M4 10a6 6 0 1 0 12 0a6 6 0 1 0-12 0', '#f41414'],
];

function ToggleButton({ on, children }: { on?: boolean; children: ReactNode }) {
  return (
    <button className={clsx('h-[17px] w-[35px] border border-black text-[11px] leading-[15px] font-bold whitespace-pre', on ? 'bg-[#bcdcc5] text-[#132218]' : 'bg-linear-to-b from-[#4c504c] to-[#333633] text-white')}>
      {children}
    </button>
  );
}

function Transport() {
  return (
    <section className="flex w-[765px] shrink-0 flex-col border-r border-black bg-[#505450]">
      <div className={clsx('flex h-[11px] items-center justify-end gap-1.5 border-b border-black pr-[3px] text-sm leading-none text-[#d0d3d0]', bar)}>
        <button aria-label="Minimize" className="h-[2px] w-2 bg-[#d0d3d0]" />
        <button aria-label="Close" className="leading-[10px]">×</button>
      </div>
      <div className="flex grow">
        <div className="flex w-[531px] flex-col">
          <div className="flex h-[14px] border-b border-black pl-[43px]">
            <div className="flex border-l border-black">
              <button className={clsx(chip, 'w-[18px]')}>↰</button>
              <button className={clsx(chip, 'w-[19px]')}>1</button>
              <button className={clsx(chip, 'w-[19px]')}>2</button>
            </div>
            <button className={clsx(chip, 'ml-3 w-[39px] border-l whitespace-pre')}><span className="text-white">标 记</span></button>
            <div className="ml-[9px] flex border-l border-black">
              {[1, 2, 3, 4, 5, 6, 7, 8, 9, 10, 11, 12].map((n) => <button key={n} className={clsx(chip, 'w-[19px]')}>{n}</button>)}
            </div>
            <button className="ml-1.5 w-[22px] border-r border-black bg-[#bcdcc5] text-[11px] leading-3 text-black">入</button>
            <button className="w-[22px] bg-[#bcdcc5] text-[11px] leading-3 text-black">出</button>
          </div>
          <div className="flex pt-[5px]">
            <div className="flex h-[57px] w-[102px] flex-col rounded-r-sm border-2 border-l-0 border-[#a3a7a3] bg-black font-['Liberation_Sans',sans-serif]">
              <div className="flex items-center justify-between pt-1 pr-1 text-[8px] leading-[10px] text-[#8b8fa0]"><span>Min : Seconds</span><Caret /></div>
              <div className="text-xl leading-6 text-[#8d91a8]">00:26</div>
              <div className="pl-[26px] text-[9px] leading-4 text-[#e7a24a]">E</div>
            </div>
            <div className="ml-[9px] flex w-[330px] flex-col gap-[6px]">
              <div className="flex h-11 justify-between rounded border-2 border-[#c3c6c3] bg-black p-px">
                {transport.map(([label, width, d, fill]) => (
                  <button key={label} aria-label={label} className={clsx('flex items-center justify-center rounded-b bg-linear-to-b from-[#cbcbc3] to-[#85867e]', width)}>
                    <svg viewBox="0 0 20 20" className="h-5 w-5"><path d={d} fill={fill} /></svg>
                  </button>
                ))}
              </div>
              <input
                type="range"
                aria-label="Shuttle"
                defaultValue={7}
                className="h-2 w-full appearance-none rounded-full border-2 border-[#b4b7b4] bg-black [&::-webkit-slider-thumb]:h-2.5 [&::-webkit-slider-thumb]:w-[25px] [&::-webkit-slider-thumb]:appearance-none [&::-webkit-slider-thumb]:border [&::-webkit-slider-thumb]:border-black [&::-webkit-slider-thumb]:bg-[#b3b4ac]"
              />
            </div>
            <div className="ml-[9px] grid grid-cols-2 content-start gap-x-[3px] gap-y-[4px]">
              <Select label="Record mode" value="Punch" className="col-span-2 mb-px h-[15px] w-[73px] font-['Liberation_Sans',sans-serif] text-[11px] text-white" textClass="pl-1 pr-3" />
              <ToggleButton on>监 测</ToggleButton>
              <ToggleButton>同 步</ToggleButton>
              <ToggleButton on>穿 插</ToggleButton>
              <ToggleButton>循 环</ToggleButton>
            </div>
          </div>
        </div>
        <div className="flex w-[10px] flex-col items-center border-x border-black text-sm leading-[14px] text-[#c3c7c3]">
          <button aria-label="Close section">×</button>
          <svg viewBox="0 0 4 8" className="mt-7 h-2 w-1"><path d="M0 0v8l4-4z" fill="#c3c7c3" /></svg>
        </div>
        <div className="flex grow flex-col">
          <div className="h-[14px] border-b border-black" />
          <div className="flex pt-[5px] pl-[7px] font-['Liberation_Sans','Noto_Sans_CJK_SC',sans-serif] text-[11px] text-white">
            <div className="flex w-16 flex-col gap-[6px]">
              <Select label="Play mode" value="Normal" className="h-[15px] w-full" textClass="pl-1 pr-3" />
              <div className="grid h-[37px] grid-cols-[28px_1fr_1fr] items-center rounded border-2 border-[#b4b7b4] bg-black pl-[3px] text-[10px] leading-3 font-bold text-[#ffa52a]">
                <span className="[text-shadow:0_0_4px_#f80]">同步</span>
                <i className="h-2 w-2 rounded-full border border-[#888] bg-[#222]" /><i className="h-2 w-2 rounded-full border border-[#888] bg-[#222]" />
                <span className="[text-shadow:0_0_4px_#f80]">MIDI</span>
                <i className="text-[8px] text-white not-italic">入</i><i className="text-[8px] text-white not-italic">出</i>
              </div>
            </div>
            <div className="ml-[7px] flex w-16 flex-col gap-[5px]">
              <Select label="bpm" value="bpm 120.00" className="h-[15px] w-full text-[10px]" textClass="pr-2" caretBox="w-2" />
              <Select label="Signature" value={'/\u00a0\u00a0\u00a0\u00a0\u00a04 / 4'} className="h-[15px] w-full text-[10px]" textClass="pl-1 pr-2" caretBox="w-2" />
              <div className="flex justify-between">
                <button className={clsx('h-[17px] w-[30px] leading-[15px] font-bold', raised)}>打点</button>
                <button aria-label="Grid lock" className={clsx('flex h-[17px] w-[29px] items-center justify-center gap-0.5', raised)}><HashIcon className="h-2.5 w-2.5" /><LockIcon className="h-2.5 w-3" /></button>
              </div>
            </div>
            <div className="relative ml-2 flex w-[67px] items-end justify-between">
              <button aria-label="Jog back" className={clsx('flex h-[17px] w-[29px] items-center justify-center', raised)}><svg viewBox="0 0 20 20" className="h-4 w-4"><path d={transport[1][2]} fill="#a9ada9" /></svg></button>
              <button aria-label="Jog forward" className={clsx('flex h-[17px] w-[29px] items-center justify-center', raised)}><svg viewBox="0 0 20 20" className="h-4 w-4"><path d={transport[4][2]} fill="#a9ada9" /></svg></button>
              <span className="absolute -top-px left-2 flex h-[49px] w-[49px] justify-center rounded-full bg-[conic-gradient(#f0f0f0,#c4c4c4_40deg,#8f8f8f_80deg,#c9c9c9_130deg,#f5f5f5_180deg,#bdbdbd_240deg,#eee_300deg,#f0f0f0)] pt-1.5 shadow-[0_1px_3px_#000]">
                <i className="h-2 w-[2px] bg-[#e86a6a]" />
              </span>
            </div>
          </div>
        </div>
      </div>
    </section>
  );
}

const scale: [string, number, boolean][] = [
  ['-60', 21, true], ['-50', 50, true], ['-40', 122, true], ['-35', 179, false], ['-30', 252, true],
  ['-25', 337, false], ['-20', 431, true], ['-15', 532, false], ['-10', 636, true],
];

function MeterPanel() {
  const id = useId();
  return (
    <section className="flex min-w-0 grow flex-col bg-black">
      <div className={clsx('h-[11px]', bar)} />
      <svg className="h-20 w-full" role="img" aria-label="Master level">
        <defs>
          <linearGradient id={`${id}g`}><stop offset="0" stopColor="#1b4308" /><stop offset="1" stopColor="#2b7203" /></linearGradient>
          <linearGradient id={`${id}y`} x2="0" y2="1"><stop offset="0" stopColor="#8f6618" /><stop offset=".35" stopColor="#e0a21a" /><stop offset=".75" stopColor="#d99b18" /><stop offset="1" stopColor="#83600f" /></linearGradient>
        </defs>
        <rect x="13" y="10" width="646" height="7" fill={`url(#${id}g)`} />
        <rect x="13" y="19" width="562" height="15" fill={`url(#${id}g)`} />
        <rect x="13" y="51" width="562" height="15" fill={`url(#${id}g)`} />
        <rect x="13" y="68" width="646" height="7" fill={`url(#${id}g)`} />
        <path d="M13 10.500h646M13 74.500h646" stroke="#58a02c" />
        <rect x="575" y="19" width="107" height="15" fill={`url(#${id}y)`} />
        <rect x="575" y="51" width="101" height="15" fill={`url(#${id}y)`} />
        <path d="M659 10h200v7H659zM659 68h200v7H659z" fill="#dfa022" />
        <path d="M451.500 10v5m20-5v5m20-5v5m21-5v5m41-5v5m20-5v5m21-5v5m21-5v5M451.500 70v5m20-5v5m20-5v5m21-5v5m41-5v5m20-5v5m21-5v5m21-5v5" stroke="#7db45c" />
        {scale.map(([text, x, major]) => (
          <g key={text}>
            <path d={major ? `M${x + 0.5} 10v7m0 2v13m0 21v13m0 2v7` : `M${x + 0.5} 10v7m0 2v3m0 41v3m0 2v7`} stroke="#a6d48a" strokeOpacity=".8" />
            <text x={x + 1} y="46" textAnchor="middle" className="font-['Liberation_Sans',sans-serif] text-[10px]" fill={major ? '#d5d8d5' : '#858985'}>{text}</text>
          </g>
        ))}
      </svg>
    </section>
  );
}

export default function App() {
  return (
    <div className="flex min-h-screen w-full flex-col overflow-hidden bg-[#666c65] font-['Open_Sans','Noto_Sans_CJK_SC',sans-serif] text-[#b9bdb9]">
      <Toolbar />
      <main className="flex">
        <Inspector />
        <TrackList />
        <Timeline />
      </main>
      <div className={clsx('h-[11px] border-y border-black', bar)} />
      <nav className="flex h-6 items-center gap-px border-b border-black bg-[#505450]">
        <span className="mr-px h-[22px] w-1 bg-[#bcdcc5]" />
        {tabs.map(([t, width]) => (
          <button key={t} className={clsx('h-[22px] overflow-hidden text-[11px] whitespace-nowrap', raised, width)}>{t}</button>
        ))}
      </nav>
      <div className="flex h-[181px] shrink-0 border-b border-black">
        <span className="w-1.5 bg-[#bcdcc5]" />
        <PitchPanel />
        <LoopPanel />
        <span className="w-1.5 bg-[#a9c4b1]" />
        <TakePanel />
      </div>
      <div className="flex min-h-[92px] grow border-t-2 border-black bg-[#505450]">
        <Transport />
        <MeterPanel />
      </div>
    </div>
  );
}
